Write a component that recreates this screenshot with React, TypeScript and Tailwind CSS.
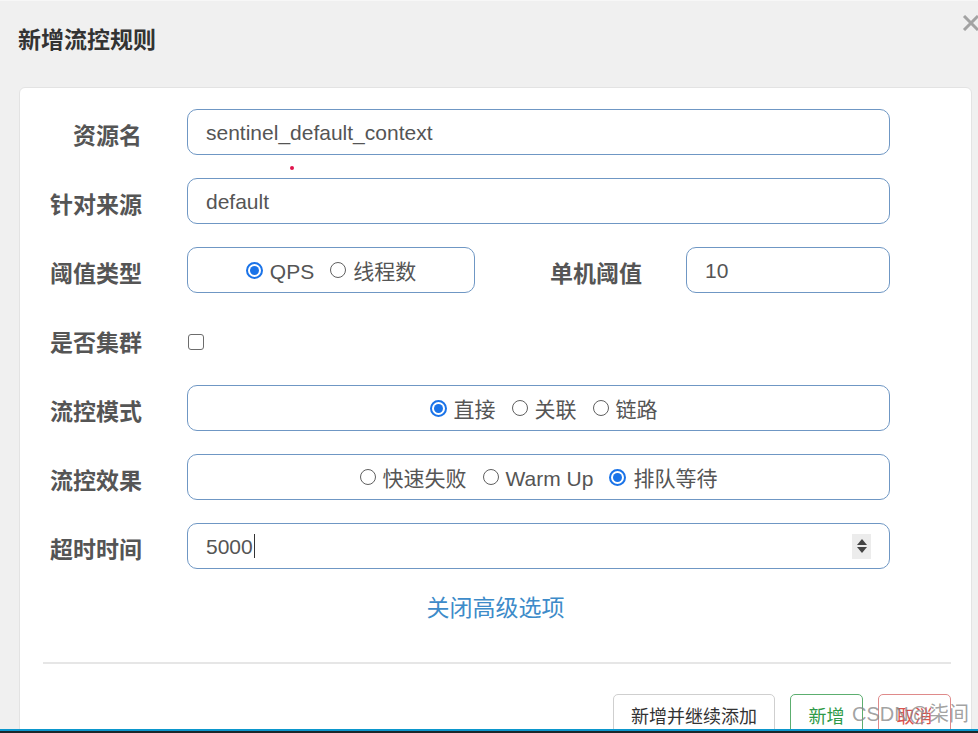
import React from "react";

const font = "font-['Liberation_Sans','Noto_Sans_CJK_SC',sans-serif]";

function Radio({ checked, label }: { checked?: boolean; label: string }) {
  return (
    <span className="flex items-center gap-[7px]">
      {checked ? (
        <span className="flex h-[17px] w-[17px] items-center justify-center rounded-full border-2 border-[#1a73e8] bg-white">
          <span className="h-[9px] w-[9px] rounded-full bg-[#1a73e8]" />
        </span>
      ) : (
        <span className="h-[16px] w-[16px] rounded-full border border-[#5f5f5f] bg-white" />
      )}
      <span className="pt-[3px]">{label}</span>
    </span>
  );
}

function Row({ label, children }: { label: string; children: React.ReactNode }) {
  return (
    <div className="flex h-[46px] items-center">
      <div className="w-[122px] pt-[9px] text-right text-[23px] font-bold leading-none text-[#555]">{label}</div>
      <div className="ml-[45px] flex h-full flex-1 items-center">{children}</div>
    </div>
  );
}

const box = "h-full rounded-[10px] border border-[#6f97c4] bg-white";

export default function App() {
  return (
    <div className={`${font} flex h-[733px] w-[978px] flex-col overflow-hidden bg-[#f0f0f0]`}>
      <div className="relative flex min-h-0 flex-1 flex-col overflow-hidden">
        <div className="h-[87px] shrink-0 border-t border-[#f7f7f7] pl-[18px] pt-[24px]">
          <h1 className="text-[23px] font-bold leading-[30px] text-[#333]">新增流控规则</h1>
        </div>
        <svg className="absolute left-[962px] top-[15px]" width="18" height="16" viewBox="0 0 18 16">
          <path d="M2 1 L16 15 M16 1 L2 15" stroke="#a3a3a3" strokeWidth="3" />
        </svg>

        <div className="relative ml-[19px] mr-[6px] flex-1 rounded-t-[6px] border border-[#e3e3e3] bg-white">
          {/* mouse pointer dot */}
          <span className="absolute left-[270px] top-[78px] h-[4px] w-[4px] rounded-full bg-[#e0144c]" />

          <div className="flex flex-col gap-[23px] pr-[81px] pt-[21px] text-[21px] text-[#555]">
            <Row label="资源名">
              <div className={`${box} flex flex-1 items-center pl-[18px] leading-none`}>sentinel_default_context</div>
            </Row>
            <Row label="针对来源">
              <div className={`${box} flex flex-1 items-center pl-[18px] leading-none`}>default</div>
            </Row>
            <Row label="阈值类型">
              <div className={`${box} flex w-[288px] items-center justify-center gap-[16px] leading-none`}>
                <Radio checked label="QPS" />
                <Radio label="线程数" />
              </div>
              <div className="w-[167px] pt-[9px] text-right text-[23px] font-bold leading-none text-[#555]">单机阈值</div>
              <div className={`${box} ml-[44px] flex flex-1 items-center pl-[18px] leading-none`}>10</div>
            </Row>
            <Row label="是否集群">
              <span className="ml-[1px] mt-[6px] h-[16px] w-[16px] rounded-[3px] border border-[#6c6c6c] bg-white" />
            </Row>
            <Row label="流控模式">
              <div className={`${box} flex flex-1 items-center justify-center gap-[16px] pl-[10px] leading-none`}>
                <Radio checked label="直接" />
                <Radio label="关联" />
                <Radio label="链路" />
              </div>
            </Row>
            <Row label="流控效果">
              <div className={`${box} flex flex-1 items-center justify-center gap-[16px] leading-none`}>
                <Radio label="快速失败" />
                <Radio label="Warm Up" />
                <Radio checked label="排队等待" />
              </div>
            </Row>
            <Row label="超时时间">
              <div className={`${box} flex flex-1 items-center pl-[18px] pr-[18px] leading-none`}>
                <span>5000</span>
                <span className="ml-[1px] h-[24px] w-[1px] bg-[#333]" />
                <span className="ml-auto flex h-[25px] w-[19px] flex-col items-center justify-center gap-[2px] bg-[#ececec]">
                  <span className="h-0 w-0 border-x-[5px] border-b-[6px] border-x-transparent border-b-[#444]" />
                  <span className="h-0 w-0 border-x-[5px] border-t-[6px] border-x-transparent border-t-[#444]" />
                </span>
              </div>
            </Row>
          </div>

          <div className="mt-[24px] text-center text-[23px] leading-[30px] text-[#3d8bc9]">关闭高级选项</div>

          <div className="ml-[23px] mr-[20px] mt-[39px] h-[2px] bg-[#e6e6e6]" />

          <div className="mr-[20px] mt-[30px] flex justify-end gap-[15px] text-[18px] leading-none">
            <div className="flex h-[46px] w-[162px] items-center justify-center rounded-[5px] border border-[#cfcfcf] text-[#333]">新增并继续添加</div>
            <div className="flex h-[46px] w-[73px] items-center justify-center rounded-[5px] border border-[#5cae6f] text-[#2e9a48]">新增</div>
            <div className="flex h-[46px] w-[73px] items-center justify-center rounded-[5px] border border-[#df8a8a] text-[#d9534f]">取消</div>
          </div>

          <span className="absolute left-[832px] top-[613px] whitespace-nowrap text-[20px] leading-[26px] text-[#8a8a8a]/80">CSDN@柒间</span>
        </div>
      </div>
      <div className="h-[2px] shrink-0 bg-[#0b97cd]" />
      <div className="h-[2px] shrink-0 bg-[#1b282c]" />
    </div>
  );
}
